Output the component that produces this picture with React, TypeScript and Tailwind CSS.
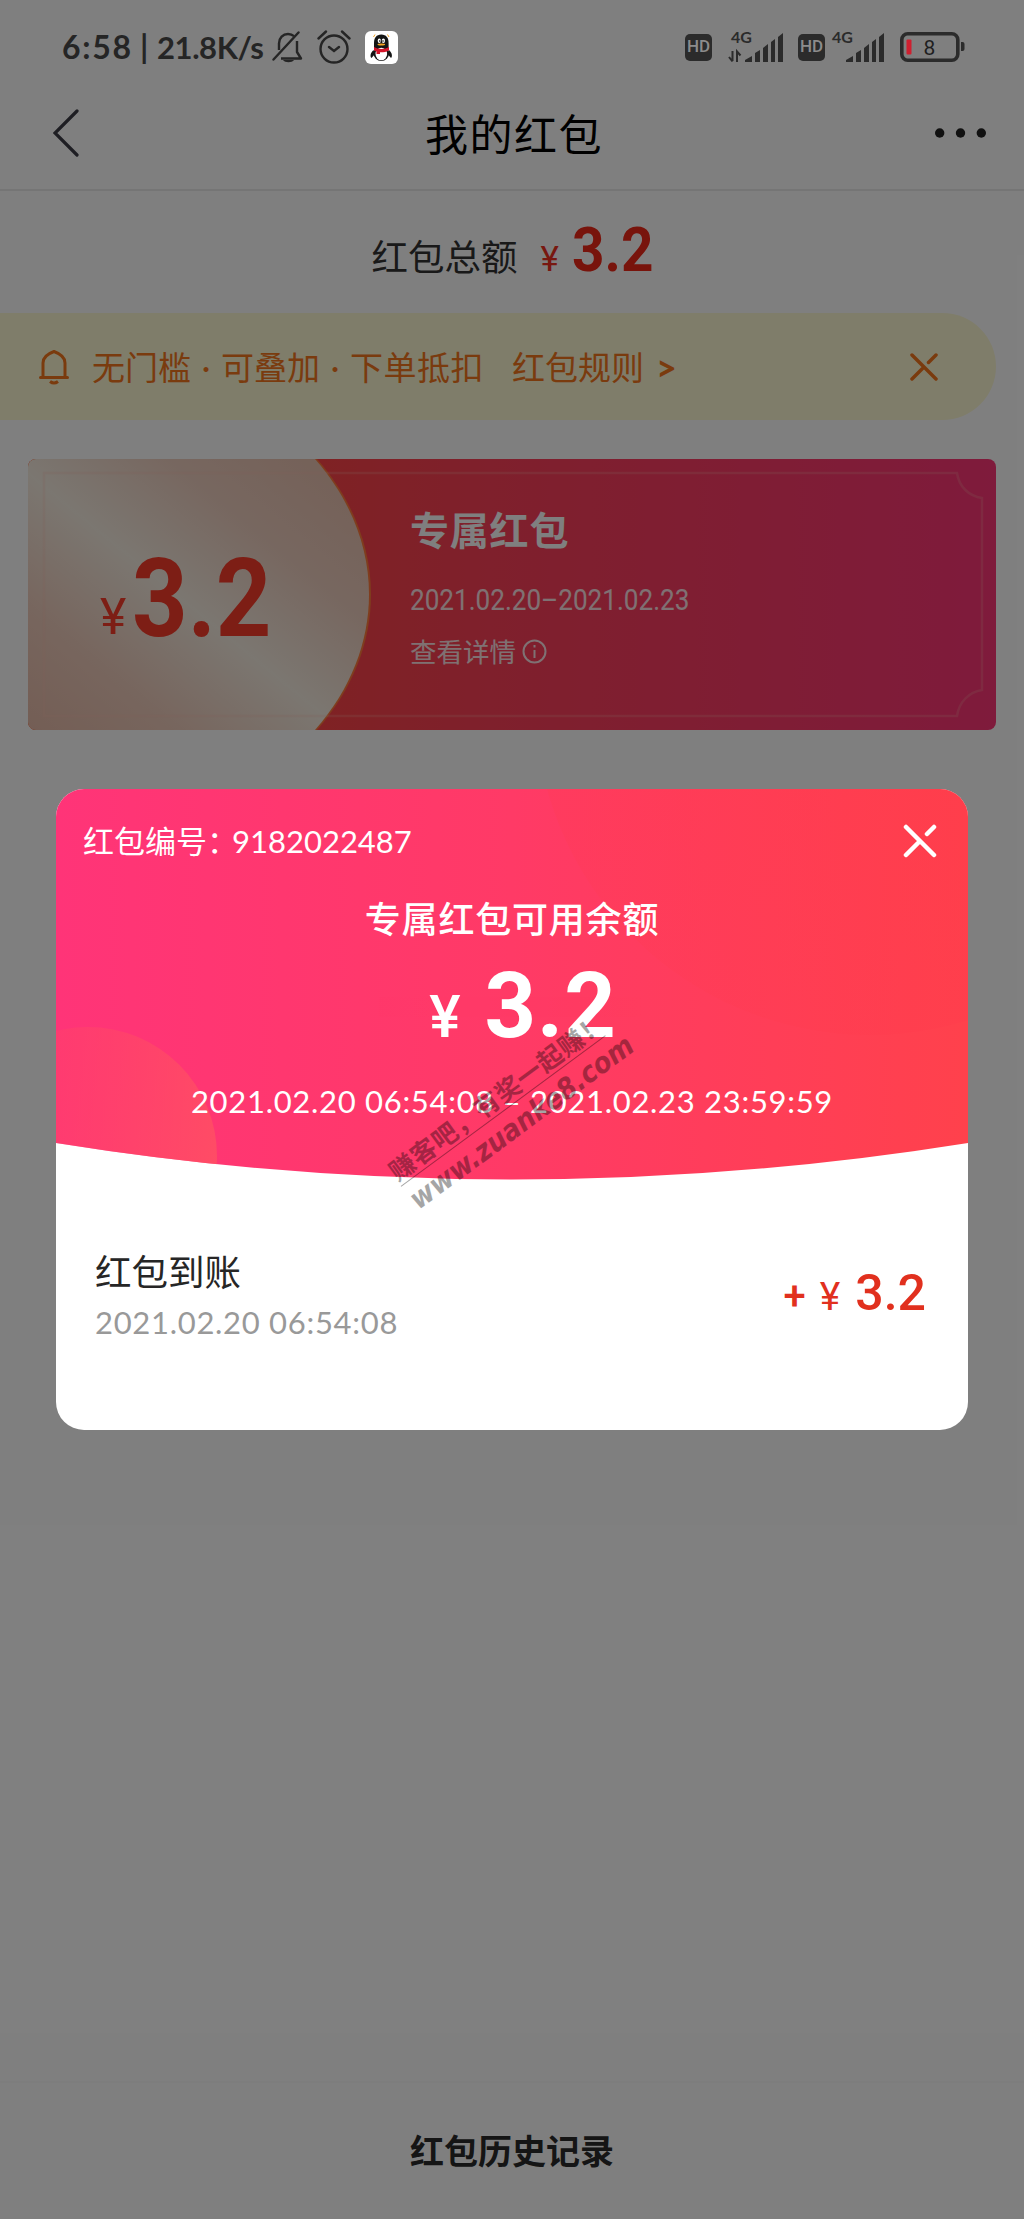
import React, { useState } from "react";

const cjk = "font-['Noto_Sans_CJK_SC',sans-serif]";
const latin = "font-['Lato','Noto_Sans_CJK_SC',sans-serif]";
const digits = "font-['Roboto','Noto_Sans_CJK_SC',sans-serif]";

const QQIcon = () => (
  <svg className="w-[33px] h-[33px]" viewBox="0 0 33 33">
    <rect width="33" height="33" rx="6" fill="#fff" />
    <path d="M8.500 19C5 22 5 26 6.500 27L10 23M24 19c3.500 3 3.500 7 2 8l-3.500-4" fill="#151515" />
    <path d="M16.300 3.500c5 0 7.300 3.500 7.300 8.500v5H9v-5c0-5 2.300-8.500 7.300-8.500z" fill="#151515" />
    <ellipse cx="16.300" cy="22.500" rx="7.800" ry="7.500" fill="#151515" />
    <ellipse cx="16.300" cy="23" rx="5.800" ry="6.300" fill="#fff" />
    <path d="M9 16c4 2.500 11 2.500 15 0v3.500c-3 1.500-6 2-9 1.800V23h-3.500v-2.500L9 19.500z" fill="#d3142a" />
    <ellipse cx="14.300" cy="9.700" rx="1.600" ry="2.300" fill="#fff" />
    <ellipse cx="18.400" cy="9.700" rx="1.600" ry="2.300" fill="#fff" />
    <circle cx="14.700" cy="10" r=".8" />
    <circle cx="18" cy="10" r=".8" />
    <ellipse cx="16.300" cy="13.500" rx="3.800" ry="1.100" fill="#f5a623" />
    <path d="M10 3.500L8.500 6M22.500 3.500L24 6" stroke="#f5a623" strokeWidth="1" />
  </svg>
);

const MutedBellIcon = () => (
  <svg className="w-8 h-8" viewBox="0 0 32 32" fill="none" stroke="#252525" strokeWidth="2.400">
    <path d="M7 19v-6.500C7 7 11 3 16 3c2.500 0 4.500.8 6 2.200M25 10v11l4 6.500H9" strokeLinejoin="round" />
    <path d="M1.500 28.500L26.500 1.500" strokeLinecap="round" />
    <path d="M11 29h11c-2 3-9 3-11 0z" fill="#252525" strokeWidth="0" />
  </svg>
);

const AlarmIcon = () => (
  <svg className="w-[34px] h-[34px]" viewBox="0 0 34 34" fill="none" stroke="#252525" strokeWidth="2.400" strokeLinecap="round">
    <circle cx="17" cy="19" r="13.500" />
    <path d="M12 17l5 4 5-4M1.500 8.500l7.500-7M32.500 8.500l-7.500-7" />
  </svg>
);

const HdBadge = () => (
  <span className={`flex w-[27px] h-[27px] items-center justify-center rounded-[5px] bg-[#2b2b2b] text-[17px] font-medium text-[#8c8c8c] ${digits}`}>
    HD
  </span>
);

const Signal: React.FC<{ data?: boolean }> = ({ data }) => (
  <svg className="w-[56px] h-[32px] overflow-visible" viewBox="0 0 56 32" fill="#2b2b2b">
    <text x="3" y="12" fontSize="16" fontWeight="700" className={latin}>
      4G
    </text>
    <path d="M17 31v-2l7-4v6zM27 31V22l5-3v12zM35 31V17l5-4v18zM43 31V11l4-3v23zM50 31V6l5-4v29z" />
    {data && <path d="M4.500 20v10M1 26l3.500 4.500M9 31V20.500l3.500 4" stroke="#2b2b2b" strokeWidth="2" fill="none" />}
  </svg>
);

const BatteryIcon = () => (
  <svg className="w-[66px] h-[30px]" viewBox="0 0 66 30">
    <rect x="1.800" y="1.800" width="56" height="26.400" rx="6" fill="none" stroke="#2b2b2b" strokeWidth="3.600" />
    <path d="M61 10h1.500q2 0 2 2v5q0 2-2 2H61z" fill="#2b2b2b" />
    <rect x="6.500" y="7.500" width="5" height="15" rx="1" fill="#cf1f2f" />
    <text x="29.500" y="22.500" fontSize="21" textAnchor="middle" fill="#1f1f1f" className={digits}>
      8
    </text>
  </svg>
);

const StatusBar = () => (
  <div className="relative z-20 flex h-[94px] items-center pl-[62px] pr-[58px] text-[#252525]">
    <div className={`flex text-[32px] font-bold whitespace-pre ${latin}`}>
      <span className="w-[78px] tracking-[1.700px]">6:58</span>
      <span className="w-[17px]">|</span>
      <span className="w-[116px] text-[31px] leading-[48px] tracking-[-0.400px]">21.8K/s</span>
    </div>
    <span className="-ml-px"><MutedBellIcon /></span>
    <span className="ml-[13px]"><AlarmIcon /></span>
    <span className="ml-[14px]"><QQIcon /></span>
    <div className="ml-auto flex items-center">
      <HdBadge />
      <span className="ml-[16px]"><Signal data /></span>
      <span className="ml-[14px]"><HdBadge /></span>
      <span className="ml-[4px]"><Signal /></span>
      <span className="ml-[15px]"><BatteryIcon /></span>
    </div>
  </div>
);

const NavBar = () => (
  <div className="flex h-[97px] items-center justify-between border-b-2 border-[#ebebeb] pb-[18px] pl-[53px] pr-[38px]">
    <svg className="w-[40px] h-[48px]" viewBox="0 0 40 48" fill="none" stroke="#3c3c46" strokeWidth="3.200" strokeLinecap="round">
      <path d="M24 2L2 24l22 22" />
    </svg>
    <h1 className={`text-[43px] tracking-[1.500px] text-black ${cjk}`}>我的红包</h1>
    <svg className="w-[51px] h-[10px]" viewBox="0 0 51 10" fill="#222">
      <circle cx="4.700" cy="5" r="4.700" />
      <circle cx="25.500" cy="5" r="4.700" />
      <circle cx="46.300" cy="5" r="4.700" />
    </svg>
  </div>
);

const Notice = () => (
  <div className={`mr-7 flex h-[107px] items-center rounded-r-full bg-[#fffad5] pl-[39px] pr-[58px] text-[33px] text-[#f5761c] ${cjk}`}>
    <svg className="w-[30px] h-[36px]" viewBox="0 0 30 36" fill="none" stroke="currentColor" strokeWidth="3">
      <path d="M4 28V14C4 8 8 5 15 2.500c7 2.500 11 5.500 11 11.500v14M1.500 28.500h27" strokeLinecap="round" />
      <path d="M11 32.500q4 3 8 0" />
    </svg>
    <span className="ml-[23px] whitespace-pre">无门槛</span>
    <span className={`w-[30px] text-center ${latin}`}>·</span>
    <span>可叠加</span>
    <span className={`w-[30px] text-center ${latin}`}>·</span>
    <span className="tracking-[0.500px]">下单抵扣</span>
    <span className="ml-[28px]">红包规则</span>
    <span className={`ml-[12px] text-[36px] font-bold leading-none ${latin}`}>&gt;</span>
    <svg className="ml-auto w-[28px] h-[28px]" viewBox="0 0 28 28" fill="none" stroke="currentColor" strokeWidth="3.500" strokeLinecap="round">
      <path d="M2 2l24 24M2 26l12-12M18.500 9.500L26 2" />
    </svg>
  </div>
);

const Coupon = () => (
  <div className="relative mx-7 mt-[39px] flex h-[271px] overflow-hidden rounded-lg">
    <svg className="absolute inset-0 h-full w-full" viewBox="0 0 968 271">
      <defs>
        <linearGradient id="coupon" x1=".3" x2="1">
          <stop offset="0" stopColor="#ff4448" />
          <stop offset=".25" stopColor="#ff4058" />
          <stop offset="1" stopColor="#ff3678" />
        </linearGradient>
        <linearGradient id="cream" gradientUnits="userSpaceOnUse" x1="39" y1="303" x2="281" y2="7">
          <stop offset="0" stopColor="#e8bcaa" />
          <stop offset=".25" stopColor="#efccbc" />
          <stop offset=".52" stopColor="#f7eee2" />
          <stop offset=".78" stopColor="#efcfc0" />
          <stop offset="1" stopColor="#ebc4b3" />
        </linearGradient>
      </defs>
      <rect width="968" height="271" fill="url(#coupon)" />
      <path d="M0 0H289C361 82 361 189 289 271H0z" fill="#ff7a3c" />
      <path d="M0 0H287C359 82 359 189 287 271H0z" fill="url(#cream)" />
      <path d="M16 14H929C931 28 941 37 954 39V231C941 233 931 243 929 257H16z" fill="none" stroke="#ffc0b0" strokeOpacity=".22" strokeWidth="2.500" />
    </svg>
    <div className={`relative flex w-[341px] items-end pb-[92px] pl-[72px] leading-none text-[#fa3c2a] ${digits}`}>
      <span className="inline-block w-[32px] text-[50px] leading-[42px]">¥</span>
      <span className="inline-block origin-left scale-x-[0.890] text-[109px] leading-[78px] font-bold">3.2</span>
    </div>
    <div className={`relative pl-[41px] text-white ${cjk}`}>
      <h2 className="mt-[41px] text-[39px] leading-[56px] font-bold tracking-[0.800px]">专属红包</h2>
      <p className={`mt-[24px] w-[300px] origin-left scale-x-[0.900] text-[29px] leading-10 whitespace-nowrap opacity-85 ${digits}`}>
        2021.02.20–2021.02.23
      </p>
      <p className="mt-[13px] flex items-center text-[26.500px] leading-9 opacity-85">
        查看详情
        <svg className="ml-[6px] w-[25px] h-[25px]" viewBox="0 0 25 25" fill="none" stroke="currentColor" strokeWidth="2">
          <circle cx="12.500" cy="12.500" r="11" />
          <path d="M12.500 11v8M12.500 6v2.500" />
        </svg>
      </p>
    </div>
  </div>
);

const Watermark = () => (
  <div className="absolute left-[322px] top-[289px] w-[254px] -rotate-[36.400deg] text-black opacity-35">
    <p className={`border-b border-black text-[25.500px] leading-[32px] font-bold tracking-[0.700px] whitespace-nowrap ${cjk}`}>赚客吧，有奖一起赚！</p>
    <p className="text-[29px] leading-[38px] font-bold italic whitespace-nowrap font-['DejaVu_Sans','Liberation_Sans',sans-serif]">
      <span className="inline-block origin-left scale-x-[0.890]">www.zuanke8.com</span>
    </p>
  </div>
);

const DetailModal: React.FC<{ close: () => void }> = ({ close }) => (
  <div className="absolute inset-0 z-10 bg-black/50 pt-[789px]">
    <div className="relative mx-14 h-[641px] overflow-hidden rounded-[28px] bg-white">
      <svg className="absolute left-0 top-0 w-[912px] h-[391px]" viewBox="0 0 912 391">
        <defs>
          <linearGradient id="header">
            <stop offset="0" stopColor="#ff3478" />
            <stop offset=".5" stopColor="#ff3a66" />
            <stop offset="1" stopColor="#ff414c" />
          </linearGradient>
          <linearGradient id="bubble" x1="0" y1=".4" x2="1" y2=".5">
            <stop offset=".1" stopColor="#ff3e68" stopOpacity=".3" />
            <stop offset="1" stopColor="#ff5560" stopOpacity=".7" />
          </linearGradient>
          <linearGradient id="glow" x1="0" y1="1" x2="1" y2="0">
            <stop offset="0" stopColor="#ff3a50" stopOpacity=".1" />
            <stop offset="1" stopColor="#ff3a44" stopOpacity=".8" />
          </linearGradient>
          <clipPath id="curve">
            <path d="M0 0H912V354Q456 427 0 354z" />
          </clipPath>
        </defs>
        <g clipPath="url(#curve)">
          <rect width="912" height="391" fill="url(#header)" />
          <circle cx="814" cy="-89" r="335" fill="url(#glow)" />
          <circle cx="32" cy="367" r="129" fill="url(#bubble)" />
        </g>
      </svg>
      <div className={`relative h-[391px] text-white ${cjk}`}>
        <div className="flex items-center justify-between pl-[27px] pr-[31px] pt-[29px]">
          <p className="text-[31px] leading-[44px]">
            红包编号：<span className={`-ml-[6px] text-[31px] ${latin}`}>9182022487</span>
          </p>
          <button onClick={close}>
            <svg className="w-[34px] h-[34px]" viewBox="0 0 34 34" fill="none" stroke="currentColor" strokeWidth="4.500" strokeLinecap="round">
              <path d="M3 3l28 28M3 31l14-14M24 10L31 3" />
            </svg>
          </button>
        </div>
        <p className="mt-[27px] text-center text-[36px] leading-[54px] font-medium tracking-[0.800px]">专属红包可用余额</p>
        <div className={`mt-[8px] flex items-baseline justify-center pl-[22px] font-bold ${digits}`}>
          <span className="mr-[24px] text-[59px] leading-[110px] font-medium">¥</span>
          <span className="text-[90px] leading-[110px] tracking-[1px]">3.2</span>
        </div>
        <p className={`mt-[9px] text-center text-[31px] leading-10 tracking-[0.700px] whitespace-nowrap ${latin}`}>
          2021.02.20 06:54:08 – 2021.02.23 23:59:59
        </p>
      </div>
      <div className="relative flex items-center justify-between pl-[39px] pr-[42px] pt-[64px]">
        <div>
          <p className={`text-[36.500px] leading-[54px] text-[#262626] ${cjk}`}>红包到账</p>
          <p className={`text-[31px] leading-[48px] tracking-[0.700px] text-[#999] ${latin}`}>2021.02.20 06:54:08</p>
        </div>
        <p className={`flex items-baseline pb-[4px] text-[#e1301e] ${digits}`}>
          <span className="mr-[14px] text-[40px] font-medium">+</span>
          <span className="mr-[15px] text-[39px]">¥</span>
          <span className="text-[50px] font-medium">3.2</span>
        </p>
      </div>
      <Watermark />
    </div>
  </div>
);

export default function App() {
  const [open, setOpen] = useState(true);

  return (
    <div className="relative flex h-[2219px] w-[1024px] flex-col overflow-hidden bg-white">
      {/* the status bar stays above the dimmed page */}
      <StatusBar />
      <NavBar />
      <div className={`flex h-[122px] items-baseline justify-center pr-[2px] pt-[14px] ${cjk}`}>
        <span className="text-[36.500px] text-[#333]">红包总额</span>
        <span className={`ml-[23px] text-[35px] text-[#f03020] ${digits}`}>¥</span>
        <span className={`ml-[13px] -mr-[9px] inline-block origin-left scale-x-[0.930] text-[61px] font-bold text-[#f02818] ${digits}`}>3.2</span>
      </div>
      <Notice />
      <Coupon />
      <div className={`mt-auto flex h-[138px] items-center justify-center border-t-2 border-[#fbfbfb] pb-[3px] text-[34px] font-bold text-[#2b2b2b] ${cjk}`}>
        红包历史记录
      </div>
      {open && <DetailModal close={() => setOpen(false)} />}
    </div>
  );
}
